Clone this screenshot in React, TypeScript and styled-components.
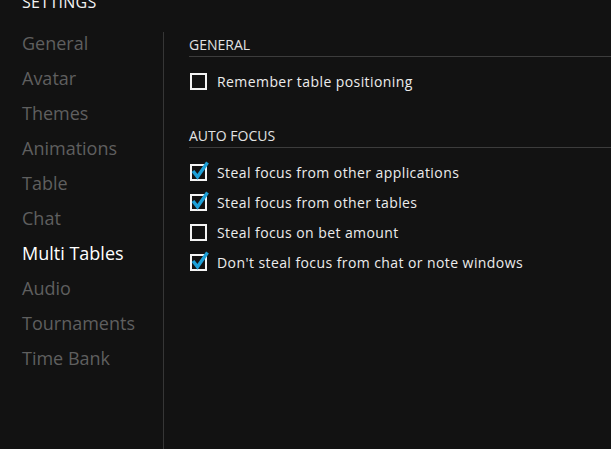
import React from "react";
import styled, { createGlobalStyle } from "styled-components";

const GlobalStyle = createGlobalStyle`
    html, body {
        margin: 0;
        padding: 0;
        background: #121212;
    }
    body {
        font-family: "Open Sans", "Noto Sans", sans-serif;
    }
`;

const Page = styled.div`
    width: 611px;
    height: 449px;
    overflow: hidden;
    background: #121212;
    color: #e6e6e6;
`;

const Title = styled.div`
    font-size: 16px;
    line-height: 20px;
    color: #f2f2f2;
    margin-top: -8px;
    padding-left: 22px;
    letter-spacing: 0.3px;
`;

const Body = styled.div`
    display: flex;
    margin-top: 14px;
    height: 430px;
`;

const Nav = styled.ul`
    list-style: none;
    margin: 0;
    padding: 0 0 0 22px;
    width: 141px;
`;

const NavItem = styled.li<{ $active?: boolean }>`
    font-size: 18px;
    line-height: 35px;
    height: 35px;
    color: ${(p) => (p.$active ? "#ffffff" : "#5f5f5f")};
`;

const Divider = styled.div`
    width: 1px;
    margin-top: 6px;
    background: #363636;
`;

const Content = styled.div`
    flex: 1;
    padding: 9px 0 0 25px;
`;

const SectionTitle = styled.div`
    font-size: 14px;
    line-height: 20px;
    color: #e2e2e2;
    border-bottom: 1px solid #3c3c3c;
    padding-bottom: 1px;
    margin-bottom: 9px;
`;

const Section = styled.div`
    & + & {
        margin-top: 30px;
    }
`;

const Row = styled.label`
    display: flex;
    align-items: center;
    height: 30px;
    font-size: 14px;
    color: #ececec;
    letter-spacing: 0.42px;
`;

const Box = styled.span`
    position: relative;
    box-sizing: border-box;
    width: 17px;
    height: 17px;
    border: 2px solid #f4f4f4;
    margin: 0 10px 0 1px;
    flex-shrink: 0;
`;

const Tick = styled.svg`
    position: absolute;
    left: -2px;
    top: -2px;
    overflow: visible;
`;

type CheckProps = {
    label: string;
    checked?: boolean;
};

const Check = (props: CheckProps) => (
    <Row>
        <Box>
            {props.checked && (
                <Tick width="17" height="17" viewBox="0 0 17 17">
                    <path
                        d="M3 7 L7.5 12.8 L17.5 -1.5"
                        fill="none"
                        stroke="#1d9fd6"
                        strokeWidth="3.4"
                    />
                </Tick>
            )}
        </Box>
        {props.label}
    </Row>
);

const navItems = [
    "General",
    "Avatar",
    "Themes",
    "Animations",
    "Table",
    "Chat",
    "Multi Tables",
    "Audio",
    "Tournaments",
    "Time Bank",
];

export default function App() {
    return (
        <Page>
            <GlobalStyle />
            <Title>SETTINGS</Title>
            <Body>
                <Nav>
                    {navItems.map((item) => (
                        <NavItem key={item} $active={item === "Multi Tables"}>
                            {item}
                        </NavItem>
                    ))}
                </Nav>
                <Divider />
                <Content>
                    <Section>
                        <SectionTitle>GENERAL</SectionTitle>
                        <Check label="Remember table positioning" />
                    </Section>
                    <Section>
                        <SectionTitle>AUTO FOCUS</SectionTitle>
                        <Check label="Steal focus from other applications" checked />
                        <Check label="Steal focus from other tables" checked />
                        <Check label="Steal focus on bet amount" />
                        <Check label="Don't steal focus from chat or note windows" checked />
                    </Section>
                </Content>
            </Body>
        </Page>
    );
}
